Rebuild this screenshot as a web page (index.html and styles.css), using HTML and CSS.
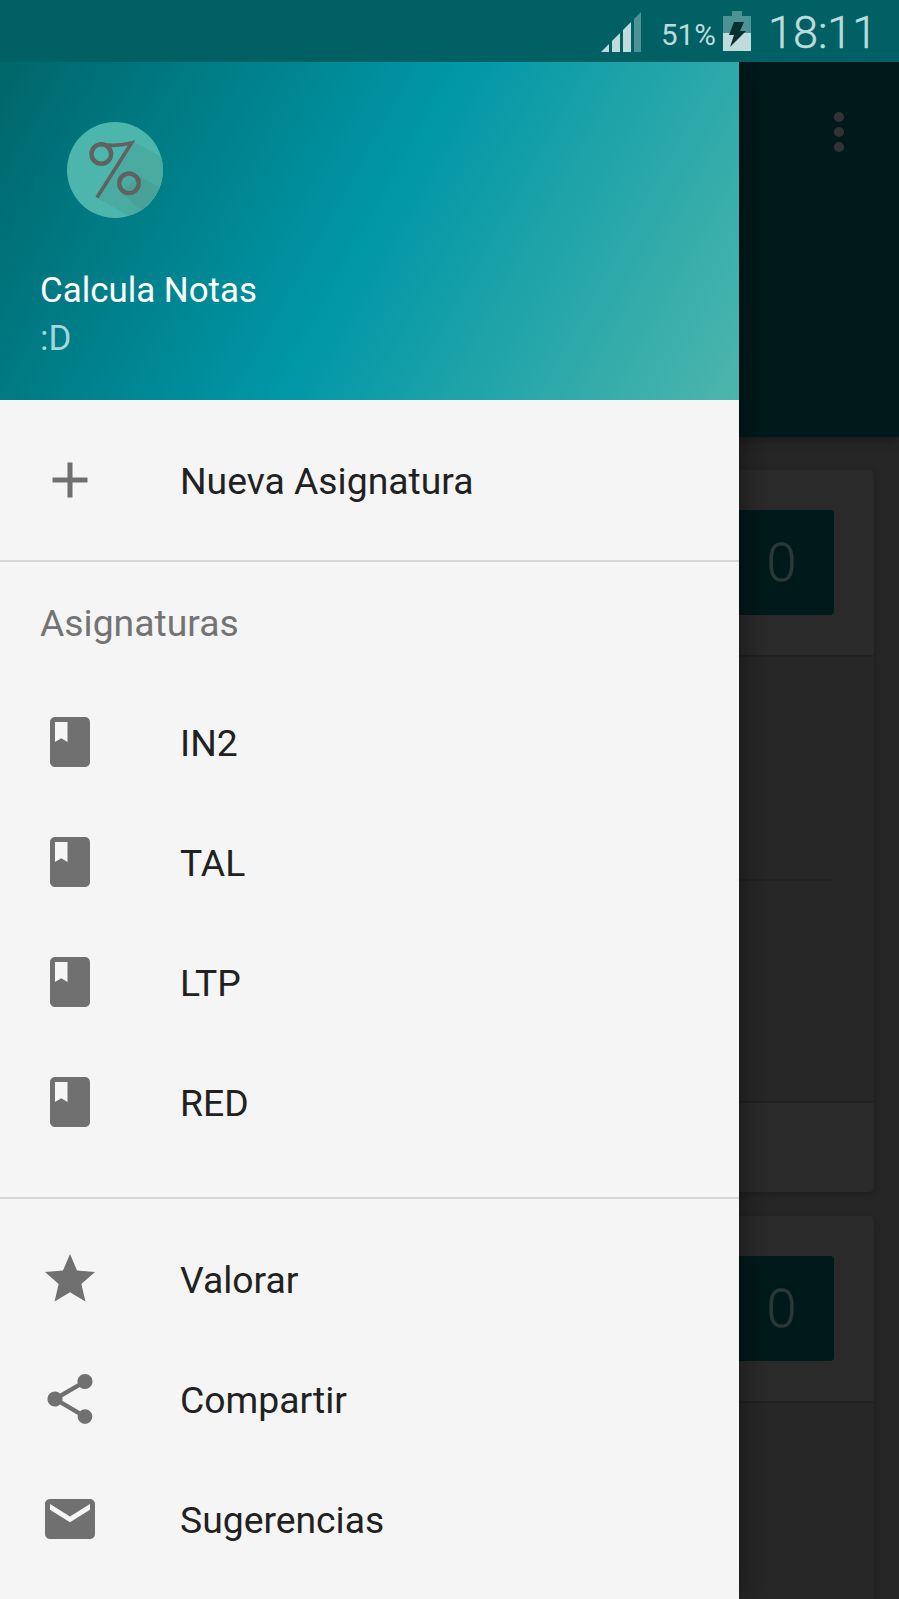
FILE: index.html
```html
<!DOCTYPE html>
<html lang="es">
<head>
<meta charset="utf-8">
<title>Calcula Notas</title>
<link rel="stylesheet" href="styles.css">
</head>
<body>
<div class="screen">
  <header class="status">
    <svg class="signal" viewBox="0 0 40 40" width="40" height="40"><path fill="#bfdbdb" d="M0 40L8 32V40zM11 29l8-8V40H11zM22 18l8-8V40H22z"/><path fill="#4d9294" d="M33 7l7-7V40h-7z"/></svg>
    <span class="percent">51%</span>
    <svg class="battery" viewBox="0 0 28 40" width="28" height="40"><path fill="#4d9294" d="M9 0h10v5h9v17H0V5h9z"/><path fill="#bfdbdb" d="M0 22h28v18H0z"/><path fill="#082f31" d="M11 11h10l-4 9h6L7 36l4-12H6z"/></svg>
    <span class="clock">18:11</span>
  </header>
  <div class="stage">
    <main class="app">
      <div class="appbar">
        <svg class="more" viewBox="0 0 12 42" width="12" height="42" fill="#333132"><circle cx="6" cy="6" r="5.1"/><circle cx="6" cy="21" r="5.1"/><circle cx="6" cy="36" r="5.1"/></svg>
      </div>
      <div class="cards">
        <section class="card">
          <div class="card-head"><div class="grade">0</div></div>
          <div class="card-body"><div class="entry"></div><div class="entry"></div></div>
          <div class="card-foot"></div>
        </section>
        <section class="card">
          <div class="card-head"><div class="grade">0</div></div>
          <div class="card-body"><div class="entry"></div><div class="entry"></div></div>
        </section>
      </div>
    </main>
    <nav class="drawer">
      <div class="profile">
        <svg class="logo" viewBox="0 0 96 96" width="96" height="96">
          <defs><clipPath id="disc"><circle cx="48" cy="48" r="48"/></clipPath></defs>
          <circle cx="48" cy="48" r="48" fill="#4db6ac"/>
          <g clip-path="url(#disc)"><path fill="#4aaba1" d="M67 20L110 43V120L28 75z"/><path fill="#49a298" d="M73 54L110 76V120L53 70z"/></g>
          <g fill="none" stroke="#616161" stroke-width="4.400"><circle cx="34.300" cy="32" r="9.800"/><circle cx="62" cy="61.300" r="9.800"/><path stroke-width="3.600" d="M34 22C44 24.500 54 23.500 64.500 21L30 75.500"/></g>
        </svg>
        <div class="name">Calcula Notas</div>
        <div class="mail">:D</div>
      </div>
      <ul class="group first">
        <li class="item"><svg class="icon" viewBox="0 0 24 24"><path d="M19 13h-6v6h-2v-6H5v-2h6V5h2v6h6z"/></svg><span>Nueva Asignatura</span></li>
      </ul>
      <h2 class="subheader">Asignaturas</h2>
      <ul class="group subjects">
        <li class="item"><svg class="icon" viewBox="0 0 24 24"><path d="M18 2H6c-1.100 0-2 .9-2 2v16c0 1.100.9 2 2 2h12c1.100 0 2-.9 2-2V4c0-1.100-.9-2-2-2zM6 4h5v8l-2.500-1.500L6 12z"/></svg><span>IN2</span></li>
        <li class="item"><svg class="icon" viewBox="0 0 24 24"><path d="M18 2H6c-1.100 0-2 .9-2 2v16c0 1.100.9 2 2 2h12c1.100 0 2-.9 2-2V4c0-1.100-.9-2-2-2zM6 4h5v8l-2.500-1.500L6 12z"/></svg><span>TAL</span></li>
        <li class="item"><svg class="icon" viewBox="0 0 24 24"><path d="M18 2H6c-1.100 0-2 .9-2 2v16c0 1.100.9 2 2 2h12c1.100 0 2-.9 2-2V4c0-1.100-.9-2-2-2zM6 4h5v8l-2.500-1.500L6 12z"/></svg><span>LTP</span></li>
        <li class="item"><svg class="icon" viewBox="0 0 24 24"><path d="M18 2H6c-1.100 0-2 .9-2 2v16c0 1.100.9 2 2 2h12c1.100 0 2-.9 2-2V4c0-1.100-.9-2-2-2zM6 4h5v8l-2.500-1.500L6 12z"/></svg><span>RED</span></li>
      </ul>
      <ul class="group">
        <li class="item"><svg class="icon" viewBox="0 0 24 24"><path d="M12 17.270L18.180 21l-1.640-7.030L22 9.240l-7.190-.61L12 2 9.190 8.630 2 9.240l5.460 4.730L5.820 21z"/></svg><span>Valorar</span></li>
        <li class="item"><svg class="icon" viewBox="0 0 24 24"><path d="M18 16.080c-.76 0-1.440.3-1.960.77L8.910 12.700c.05-.23.09-.46.09-.7s-.04-.47-.09-.7l7.050-4.110c.54.5 1.250.81 2.040.81 1.660 0 3-1.340 3-3s-1.340-3-3-3-3 1.340-3 3c0 .24.04.47.09.7L8.040 9.810C7.500 9.310 6.790 9 6 9c-1.660 0-3 1.340-3 3s1.340 3 3 3c.79 0 1.500-.31 2.040-.81l7.120 4.160c-.05.21-.08.43-.08.65 0 1.610 1.310 2.920 2.920 2.920s2.920-1.310 2.920-2.920-1.310-2.920-2.920-2.920z"/></svg><span>Compartir</span></li>
        <li class="item"><svg class="icon" viewBox="0 0 24 24"><path d="M20 4H4c-1.100 0-2 .9-2 2v12c0 1.100.9 2 2 2h16c1.100 0 2-.9 2-2V6c0-1.100-.9-2-2-2zm0 4.300l-8 5-8-5V6l8 5 8-5z"/></svg><span>Sugerencias</span></li>
      </ul>
    </nav>
  </div>
</div>
</body>
</html>
```
FILE: styles.css
```css
* { box-sizing: border-box; margin: 0; padding: 0; }
body { font-family: Roboto, sans-serif; overflow: hidden; background: #272727; }
.screen { width: 899px; height: 1599px; overflow: hidden; display: flex; flex-direction: column; }
.status { height: 62px; flex: none; background: #006064; color: #bfdbdb; display: flex; justify-content: flex-end; align-items: flex-start; padding: 12px 27px 0 0; }
.signal { margin-right: 20px; }
.percent { width: 54px; font-size: 29.5px; line-height: 36px; margin: 5px 8px 0 0; }
.battery { margin: -1px 17px 0 0; }
.clock { width: 104px; font-size: 45px; line-height: 54px; margin-top: -6px; font-weight: 300; -webkit-text-stroke: .5px #bfdbdb; white-space: nowrap; }

.stage { flex: 1; min-height: 0; display: grid; grid-template: 1fr / 1fr; }
.app, .drawer { grid-area: 1 / 1; min-height: 0; }
.app { background: #262626; overflow: hidden; }
.appbar { height: 375px; background: #001a1b; box-shadow: 0 3px 8px #1b1b1b; display: flex; justify-content: flex-end; padding: 49px 54px 0 0; }
.cards { padding: 33px 25px 0; display: flex; flex-direction: column; gap: 24px; }
.card { background: #2a2a2a; border-radius: 5px; box-shadow: 0 2px 5px #1e1e1e; overflow: hidden; }
.card-head { height: 187px; padding: 40px; display: flex; justify-content: flex-end; border-bottom: 2px solid #222; }
.grade { width: 105px; height: 105px; background: #001a1b; border-radius: 4px; color: #2b3838; font-size: 54px; font-weight: 300; line-height: 106px; text-align: center; -webkit-text-stroke: .4px #2b3838; }
.card-body { padding: 0 40px; background: #272727; border-bottom: 2px solid #222; }
.entry { height: 222px; }
.entry + .entry { border-top: 2px solid #222; }
.card-foot { height: 89px; }

.drawer { width: 739px; background: #f5f5f5; color: #212121; box-shadow: 0 0 30px rgba(0,0,0,.5); clip-path: inset(0 -30px 0 0); }
.profile { height: 338px; padding: 60px 40px 0; color: #fff; background: linear-gradient(119deg, #00666a, #0097a7 50%, #4db6ac); font-size: 34.9px; }
.logo { display: block; margin-left: 27px; }
.name { line-height: 46px; margin-top: 50px; }
.mail { line-height: 46px; margin-top: 2px; color: #a6d5dd; }
.group { list-style: none; }
.first { padding: 20px 0; border-bottom: 2px solid #d6d6d6; }
.subjects { padding-bottom: 35px; border-bottom: 2px solid #d6d6d6; margin-bottom: 20px; }
.item { height: 120px; padding: 0 40px; display: flex; align-items: center; gap: 80px; font-size: 37.3px; white-space: nowrap; }
.item span { padding-top: 2px; }
.icon { width: 60px; height: 60px; fill: #707070; flex: none; }
.subheader { height: 120px; line-height: 123px; padding-left: 40px; font-size: 37.3px; font-weight: 400; color: #737373; }
```
